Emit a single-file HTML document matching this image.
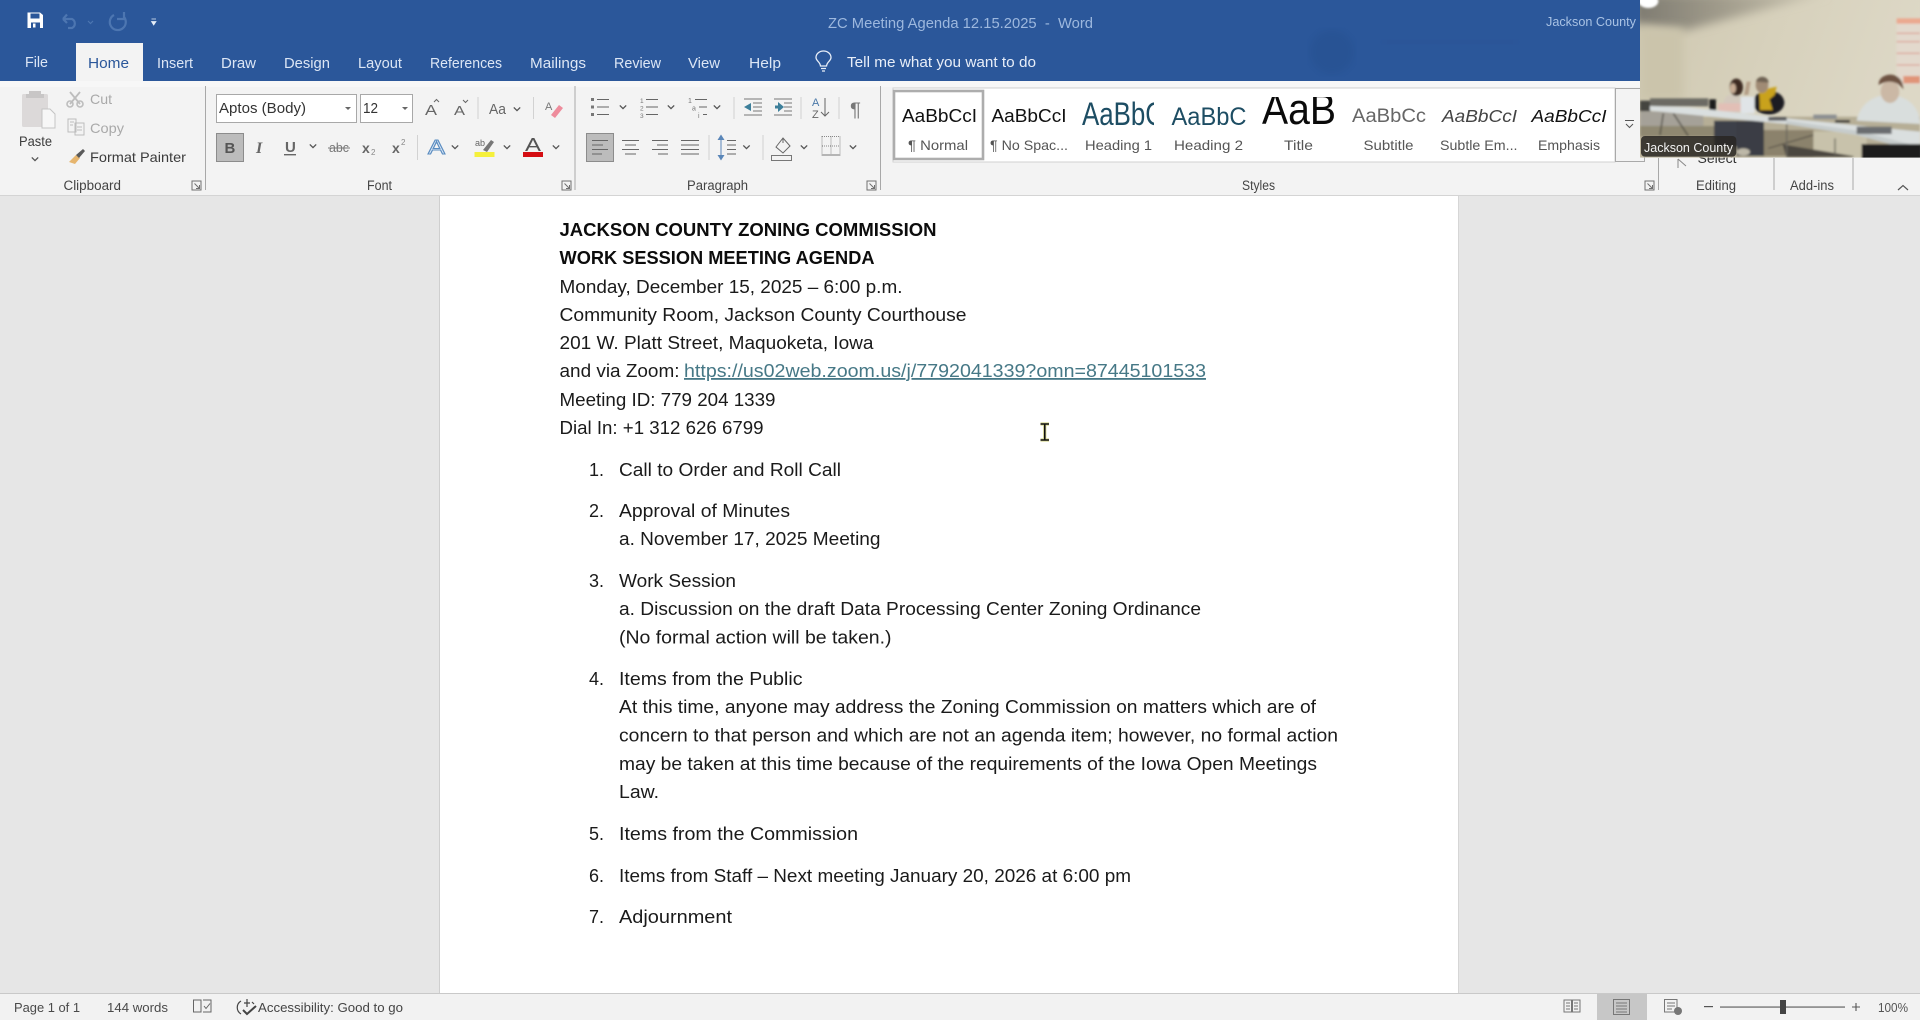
<!DOCTYPE html>
<html lang="en"><head><meta charset="utf-8"><title>ZC Meeting Agenda 12.15.2025 - Word</title>
<style>
html,body{margin:0;padding:0;background:#e6e6e6;width:1920px;height:1020px;overflow:hidden}
svg{display:block;position:absolute;left:0;top:0}
text{font-family:"Liberation Sans",sans-serif;white-space:pre}
.tab{font-size:15px;fill:#dce6f5}
.rb{font-size:14px;fill:#3c3c3c}
.lb{font-size:13.5px;fill:#444}
.dis{font-size:14px;fill:#a9a9a9}
.sl{font-size:14px;fill:#555}
.st{font-size:13.5px;fill:#505050}
.d{font-size:18px;fill:#1a1a1a}
.b{font-size:18px;fill:#0c0c0c;font-weight:bold}
.ic{fill:none;stroke:#666;stroke-width:1.2}
.sep{stroke:#d2d2d2;stroke-width:1}
.gsep{stroke:#a8a8a8;stroke-width:1}
</style></head><body>
<svg width="1920" height="1020" viewBox="0 0 1920 1020" xmlns="http://www.w3.org/2000/svg">
<defs>
<path id="ch" d="M-3.2,-1.6 L0,1.6 L3.2,-1.6" fill="none" stroke="#555" stroke-width="1.3"/>
<path id="dl" d="M0,0 H9 V9 H0 Z M2.5,2.5 L7.5,7.5 M7.5,4 V7.5 H4" fill="none" stroke="#707070" stroke-width="1"/>
<filter id="bl" x="-5%" y="-5%" width="110%" height="110%"><feGaussianBlur stdDeviation="3.5"/></filter>
<filter id="bl2" x="-20%" y="-20%" width="140%" height="140%"><feGaussianBlur stdDeviation="14"/></filter>
<linearGradient id="wall" x1="0" y1="0" x2="1" y2="0.2"><stop offset="0" stop-color="#cfc8b1"/><stop offset="0.5" stop-color="#d7d1bc"/><stop offset="1" stop-color="#ddd8c6"/></linearGradient>
<linearGradient id="ceil" x1="0" y1="0" x2="1" y2="0"><stop offset="0" stop-color="#7d7a70"/><stop offset="0.45" stop-color="#a09b8b"/><stop offset="1" stop-color="#cfc9b5"/></linearGradient>
<clipPath id="vc"><rect x="0" y="0" width="840" height="473"/></clipPath>
<clipPath id="galc"><rect x="1250" y="97" width="100" height="60"/></clipPath>
<clipPath id="h1c"><rect x="1078" y="92" width="76" height="60"/></clipPath>
</defs>

<!-- Backgrounds -->
<rect x="0" y="0" width="1920" height="1020" fill="#e6e6e6"/>
<rect x="0" y="0" width="1920" height="81" fill="#2b579a"/>
<rect x="0" y="81" width="1920" height="114" fill="#f3f3f3"/>
<rect x="0" y="81" width="1640" height="6" fill="#f7f7f7"/>
<rect x="0" y="195" width="1920" height="1" fill="#d4d4d4"/>
<rect x="440" y="196" width="1018" height="797" fill="#fff"/>
<rect x="439" y="196" width="1" height="797" fill="#cfcfcf"/>
<rect x="1458" y="196" width="1" height="797" fill="#d6d6d6"/>
<rect x="0" y="993" width="1920" height="27" fill="#f2f2f2"/>
<rect x="0" y="993" width="1920" height="1" fill="#c9c9c9"/>

<!-- Title bar watermark -->
<g opacity=".09"><circle cx="1332" cy="52" r="22" fill="#10305f" filter="url(#bl)"/><rect x="1385" y="40" width="130" height="4" fill="#3b2d6f" filter="url(#bl)"/></g>

<!-- QAT -->
<g>
<path d="M27.5,12.5 H40 L43,15 V28 H27.5 Z" fill="#fff"/>
<rect x="30.5" y="13.5" width="9" height="5" fill="#2b579a"/>
<rect x="31" y="22.5" width="9" height="5.5" fill="#2b579a"/>
<rect x="33" y="23.5" width="2.5" height="4" fill="#fff"/>
<path d="M63,19 H72 A5,5 0 0 1 72,28 H68 M63,19 L67,14.5 M63,19 L67,23" fill="none" stroke="#4d76b1" stroke-width="2.2"/>
<path d="M88,21 l2.5,2.5 l2.5,-2.5" fill="none" stroke="#4d76b1" stroke-width="1.2"/>
<path d="M114,15 A8,8 0 1 0 124,17 M124,12 V19 H117" fill="none" stroke="#4d76b1" stroke-width="2.2"/>
<path d="M151.5,19 H156 M151.5,21.5 H156 L153.7,25 Z" fill="#e6eef8" stroke="#e6eef8" stroke-width=".8"/>
</g>

<!-- Tabs -->
<rect x="76" y="43" width="67" height="38" fill="#f3f3f3"/>
<text class="tab" x="25" y="67" textLength="23" lengthAdjust="spacingAndGlyphs">File</text>
<text class="tab" style="fill:#2b579a" x="88" y="68" textLength="41" lengthAdjust="spacingAndGlyphs">Home</text>
<text class="tab" x="157" y="68" textLength="36" lengthAdjust="spacingAndGlyphs">Insert</text>
<text class="tab" x="221" y="68" textLength="35" lengthAdjust="spacingAndGlyphs">Draw</text>
<text class="tab" x="284" y="68" textLength="46" lengthAdjust="spacingAndGlyphs">Design</text>
<text class="tab" x="358" y="68" textLength="44" lengthAdjust="spacingAndGlyphs">Layout</text>
<text class="tab" x="430" y="68" textLength="72" lengthAdjust="spacingAndGlyphs">References</text>
<text class="tab" x="530" y="68" textLength="56" lengthAdjust="spacingAndGlyphs">Mailings</text>
<text class="tab" x="614" y="68" textLength="47" lengthAdjust="spacingAndGlyphs">Review</text>
<text class="tab" x="688" y="68" textLength="32" lengthAdjust="spacingAndGlyphs">View</text>
<text class="tab" x="749" y="68" textLength="32" lengthAdjust="spacingAndGlyphs">Help</text>
<path d="M820.5,66 C820,61.5 816,61 816,57.5 A7.5,6.5 0 0 1 831,57.5 C831,61 827,61.5 826.5,66 Z M821,68.5 H826 M822,71 H825" fill="none" stroke="#e8eef8" stroke-width="1.3"/>
<text class="tab" style="fill:#e8eef8" x="847" y="67" textLength="189" lengthAdjust="spacingAndGlyphs">Tell me what you want to do</text>
<text x="828" y="28" style="font-size:15px;fill:#9db8de" textLength="265" lengthAdjust="spacingAndGlyphs">ZC Meeting Agenda 12.15.2025  -  Word</text>
<text x="1546" y="26" style="font-size:13px;fill:#a9c2e4" textLength="90" lengthAdjust="spacingAndGlyphs">Jackson County</text>

<!-- Clipboard group -->
<g>
<rect x="22" y="94" width="26" height="33" rx="1.5" fill="#dcd9d9"/>
<path d="M29,94 V91 H41 V94 H44 V98 H26 V94 Z" fill="#c8c6c6"/>
<path d="M42,109 H50 L55,114 V128 H42 Z" fill="#f7f7f7" stroke="#c4c4c4"/>
<text class="rb" x="19" y="146" textLength="33" lengthAdjust="spacingAndGlyphs">Paste</text>
<use href="#ch" x="35" y="159"/>
<path d="M70,92 L80,104 M80,92 L70,104" stroke="#bdbdbd" stroke-width="1.8"/>
<circle cx="70" cy="104" r="3" fill="none" stroke="#bdbdbd" stroke-width="1.6"/><circle cx="80" cy="104" r="3" fill="none" stroke="#bdbdbd" stroke-width="1.6"/>
<text class="dis" x="90" y="104" textLength="22" lengthAdjust="spacingAndGlyphs">Cut</text>
<path d="M68,119 H76 V132 H68 Z M75,123 H84 V135 H75 Z M70,122 H74 M70,125 H73 M77,127 H82 M77,130 H82" fill="#f3f3f3" stroke="#bdbdbd"/>
<text class="dis" x="90" y="133" textLength="34" lengthAdjust="spacingAndGlyphs">Copy</text>
<path d="M69,162 L76,155 L80,158 L75,164 Z" fill="#e6b56e"/>
<path d="M76,155 L83,149 L85,151 L79,158 Z" fill="#5a5a5a"/>
<text class="rb" x="90" y="162" textLength="96" lengthAdjust="spacingAndGlyphs">Format Painter</text>
<text class="lb" x="63.5" y="190" textLength="57.5" lengthAdjust="spacingAndGlyphs">Clipboard</text>
<use href="#dl" x="192" y="181"/>
<line class="gsep" x1="205.5" y1="86" x2="205.5" y2="190"/>
</g>

<!-- Font group -->
<g>
<rect x="216.5" y="94.5" width="140" height="28" fill="#fff" stroke="#a8a8a8"/>
<rect x="360.5" y="94.5" width="52" height="28" fill="#fff" stroke="#a8a8a8"/>
<text x="219" y="113" style="font-size:15px;fill:#333" textLength="87" lengthAdjust="spacingAndGlyphs">Aptos (Body)</text>
<text x="363" y="113" style="font-size:15px;fill:#333" textLength="15" lengthAdjust="spacingAndGlyphs">12</text>
<path d="M345,107 h6 l-3,3 z M402,107 h6 l-3,3 z" fill="#666"/>
<text x="425" y="115" style="font-size:15px;fill:#666" textLength="12" lengthAdjust="spacingAndGlyphs">A</text>
<path d="M434,102 l2.5,-2.5 l2.5,2.5" fill="none" stroke="#666"/>
<text x="454" y="115" style="font-size:13px;fill:#666" textLength="11" lengthAdjust="spacingAndGlyphs">A</text>
<path d="M463,100 l2.5,2.5 l2.5,-2.5" fill="none" stroke="#666"/>
<line class="sep" x1="478" y1="97" x2="478" y2="119"/>
<text x="489" y="114" style="font-size:14.5px;fill:#666" textLength="17" lengthAdjust="spacingAndGlyphs">Aa</text>
<use href="#ch" x="517" y="109"/>
<line class="sep" x1="533.5" y1="97" x2="533.5" y2="119"/>
<text x="545" y="110" style="font-size:11px;fill:#777">A</text>
<path d="M551,115 L559,105 L563,108 L555,118 Z" fill="#ee8c9c"/>

<rect x="216.5" y="133.5" width="27" height="28" fill="#bcbcbc" stroke="#8c8c8c"/>
<text x="224.5" y="153" style="font-size:15px;font-weight:bold;fill:#555">B</text>
<text x="256" y="153" style="font-size:16px;font-weight:bold;font-style:italic;fill:#666;font-family:'Liberation Serif',serif">I</text>
<text x="285" y="152" style="font-size:15px;font-weight:bold;fill:#666">U</text>
<rect x="284" y="154" width="12" height="1.4" fill="#666"/>
<use href="#ch" x="313" y="146"/>
<text x="329" y="152" style="font-size:12.5px;fill:#777" textLength="20" lengthAdjust="spacingAndGlyphs">abc</text>
<line x1="328" y1="148" x2="350" y2="148" stroke="#777"/>
<text x="362" y="153" style="font-size:14px;font-weight:bold;fill:#666">x</text>
<text x="371" y="155" style="font-size:8px;fill:#888">2</text>
<text x="392" y="153" style="font-size:14px;font-weight:bold;fill:#666">x</text>
<text x="401" y="145" style="font-size:8px;fill:#888">2</text>
<line class="sep" x1="417.5" y1="135" x2="417.5" y2="160"/>
<text x="428" y="154" style="font-size:20px;fill:#dce9f7;stroke:#5a8cc0;stroke-width:1" textLength="17" lengthAdjust="spacingAndGlyphs">A</text>
<use href="#ch" x="455" y="147"/>
<text x="475" y="146" style="font-size:9px;fill:#666">ab</text>
<path d="M483,150 L491,140 L494,142 L487,152 Z" fill="#777"/>
<rect x="474.5" y="152" width="20" height="5" fill="#f5f03c"/>
<use href="#ch" x="507" y="147"/>
<text x="525" y="151" style="font-size:18px;fill:#555" textLength="16" lengthAdjust="spacingAndGlyphs">A</text>
<rect x="523" y="152" width="20" height="5" fill="#d40d12"/>
<use href="#ch" x="556" y="147"/>
<text class="lb" x="367" y="190" textLength="25" lengthAdjust="spacingAndGlyphs">Font</text>
<use href="#dl" x="562" y="181"/>
<line class="gsep" x1="575" y1="86" x2="575" y2="190"/>
</g>

<!-- Paragraph group -->
<g>
<path d="M597,99.5 H609 M597,107 H609 M597,114.5 H609 M646,99.5 H658 M646,107 H658 M646,114.5 H658 M695,99.5 H707 M699,107 H707 M703,114.5 H707" stroke="#666" fill="none"/>
<path d="M591,98 h3 v3 h-3 z M591,105.5 h3 v3 h-3 z M591,113 h3 v3 h-3 z" fill="#777"/>
<text x="640" y="103" style="font-size:6.5px;fill:#777">1</text><text x="640" y="110.5" style="font-size:6.5px;fill:#777">2</text><text x="640" y="118" style="font-size:6.5px;fill:#777">3</text>
<text x="688" y="103" style="font-size:7px;fill:#777">1</text><text x="692" y="110.5" style="font-size:7px;fill:#777">a</text><text x="698" y="118" style="font-size:7px;fill:#777">i</text>
<use href="#ch" x="623" y="107"/><use href="#ch" x="671" y="107"/><use href="#ch" x="717" y="107"/>
<line class="sep" x1="734" y1="97" x2="734" y2="119"/>
<path d="M744,99 H762 M753,103 H762 M753,107 H762 M753,111 H762 M744,115 H762 M784,103 H792 M784,107 H792 M784,111 H792 M774,99 H792 M774,115 H792" stroke="#777"/>
<path d="M751,103 L744,107 L751,111 Z M775,105.5 H778 V102 L784,107 L778,112 V108.5 H775 Z" fill="#3d7f9a"/>
<line class="sep" x1="801" y1="97" x2="801" y2="119"/>
<text x="812" y="106" style="font-size:11px;fill:#4a78a8">A</text><text x="812" y="118" style="font-size:11px;fill:#666">Z</text>
<path d="M825,98 V116 M821,112 L825,116 L829,112" fill="none" stroke="#666"/>
<line class="sep" x1="839" y1="97" x2="839" y2="119"/>
<text x="850" y="116" style="font-size:19px;fill:#777" textLength="11" lengthAdjust="spacingAndGlyphs">¶</text>

<rect x="586.5" y="133.5" width="27" height="28" fill="#bcbcbc" stroke="#8c8c8c"/>
<path d="M592,140.5 H608 M592,145 H603 M592,149.5 H608 M592,154 H602" stroke="#666"/>
<path d="M622,140.5 H639 M625,145 H636 M622,149.5 H639 M625,154 H636 M652,140.5 H668 M657,145 H668 M652,149.5 H668 M658,154 H668 M681,140.5 H699 M681,145 H699 M681,149.5 H699 M681,154 H699" stroke="#666"/>
<line class="sep" x1="709" y1="135" x2="709" y2="160"/>
<path d="M721,135 V159" stroke="#5a86b8"/><path d="M717.5,140 L721,134.5 L724.5,140 Z M717.5,155 L721,160.5 L724.5,155 Z" fill="#5a86b8"/>
<path d="M727,140.5 H736 M727,145 H736 M727,149.5 H736 M727,154 H736" stroke="#666"/>
<use href="#ch" x="746.5" y="147"/>
<line class="sep" x1="763" y1="135" x2="763" y2="160"/>
<path d="M776,147 L783,138 L790,146 L783,153 Z M783,138 V143" fill="none" stroke="#666"/>
<rect x="771.5" y="155.5" width="20" height="5" fill="none" stroke="#777"/>
<use href="#ch" x="804" y="147"/>
<path d="M822,136.5 H840 V155 H822 Z M831,136.5 V155 M822,146 H840" fill="none" stroke="#888" stroke-dasharray="1 1"/>
<path d="M822,155 H840" stroke="#777"/>
<use href="#ch" x="853" y="147"/>
<text class="lb" x="687" y="190" textLength="61" lengthAdjust="spacingAndGlyphs">Paragraph</text>
<use href="#dl" x="867" y="181"/>
<line class="gsep" x1="880.5" y1="86" x2="880.5" y2="190"/>
</g>

<!-- Styles gallery -->
<g>
<rect x="893" y="88" width="722" height="74" fill="#fff" stroke="#d2d2d2"/>
<rect x="894" y="91" width="89" height="68" fill="#fff" stroke="#adadad" stroke-width="2.6"/>
<rect x="1615.5" y="88.5" width="29" height="73" fill="#f3f3f3" stroke="#a9a9a9"/>
<path d="M1625,120.5 H1634 M1626,124 L1629.5,127.5 L1633,124" fill="none" stroke="#555"/>

<text x="902" y="122" style="font-size:18px;fill:#111" textLength="75" lengthAdjust="spacingAndGlyphs">AaBbCcI</text>
<text x="991.5" y="122" style="font-size:18px;fill:#111" textLength="75" lengthAdjust="spacingAndGlyphs">AaBbCcI</text>
<text x="1082" y="125" clip-path="url(#h1c)" style="font-size:32px;fill:#1d4d63" textLength="82" lengthAdjust="spacingAndGlyphs">AaBbC</text>
<text x="1171.5" y="125" style="font-size:25px;fill:#1d4d63" textLength="75" lengthAdjust="spacingAndGlyphs">AaBbC</text>
<text x="1262" y="124" clip-path="url(#galc)" style="font-size:44px;fill:#0a0a0a" textLength="74" lengthAdjust="spacingAndGlyphs">AaB</text>
<text x="1352" y="122" style="font-size:19px;fill:#666" textLength="74" lengthAdjust="spacingAndGlyphs">AaBbCc</text>
<text x="1442" y="122" style="font-size:17.5px;font-style:italic;fill:#444" textLength="75" lengthAdjust="spacingAndGlyphs">AaBbCcI</text>
<text x="1531.5" y="122" style="font-size:17.5px;font-style:italic;fill:#111" textLength="75" lengthAdjust="spacingAndGlyphs">AaBbCcI</text>

<text class="sl" x="908" y="150" textLength="60" lengthAdjust="spacingAndGlyphs">¶ Normal</text>
<text class="sl" x="990" y="150" textLength="78" lengthAdjust="spacingAndGlyphs">¶ No Spac...</text>
<text class="sl" x="1085" y="150" textLength="67" lengthAdjust="spacingAndGlyphs">Heading 1</text>
<text class="sl" x="1174" y="150" textLength="69" lengthAdjust="spacingAndGlyphs">Heading 2</text>
<text class="sl" x="1284" y="150" textLength="29" lengthAdjust="spacingAndGlyphs">Title</text>
<text class="sl" x="1363.5" y="150" textLength="50" lengthAdjust="spacingAndGlyphs">Subtitle</text>
<text class="sl" x="1440" y="150" textLength="77.5" lengthAdjust="spacingAndGlyphs">Subtle Em...</text>
<text class="sl" x="1538" y="150" textLength="62" lengthAdjust="spacingAndGlyphs">Emphasis</text>

<text class="lb" x="1242" y="190" textLength="33" lengthAdjust="spacingAndGlyphs">Styles</text>
<use href="#dl" x="1645" y="181"/>
<line class="gsep" x1="1658.5" y1="158" x2="1658.5" y2="190"/>
<path d="M1678,159 L1686,166 M1678,159 V168" fill="none" stroke="#888"/>
<text x="1697.5" y="163" style="font-size:14px;fill:#333" textLength="39" lengthAdjust="spacingAndGlyphs">Select</text>
<text class="lb" x="1696" y="190" textLength="40" lengthAdjust="spacingAndGlyphs">Editing</text>
<line class="gsep" x1="1774" y1="158" x2="1774" y2="190"/>
<text class="lb" x="1790" y="190" textLength="44" lengthAdjust="spacingAndGlyphs">Add-ins</text>
<line class="gsep" x1="1853" y1="158" x2="1853" y2="190"/>
<path d="M1898,190 L1903,185.5 L1908,190" fill="none" stroke="#555" stroke-width="1.2"/>
</g>

<!-- Video -->
<g transform="translate(1640,0) scale(.33333)" clip-path="url(#vc)">
<rect x="0" y="0" width="840" height="473" fill="url(#wall)"/>
<path d="M-20,-20 H560 L130,92 L-20,70 Z" fill="url(#ceil)" filter="url(#bl2)"/>
<rect x="0" y="85" width="130" height="215" fill="#cbc4ab" filter="url(#bl2)"/>
<g filter="url(#bl)">
<ellipse cx="25" cy="4" rx="30" ry="20" fill="#fff"/>
<rect x="770" y="55" width="80" height="200" fill="#e3d9cd"/>
<rect x="770" y="55" width="80" height="16" fill="#eba88f"/>
<path d="M770,100 H840 M770,125 H840 M770,160 H840 M770,195 H840" stroke="#dca598" stroke-width="4"/>
<rect x="790" y="228" width="50" height="22" fill="#e09478"/>
<!-- floor -->
<rect x="0" y="350" width="840" height="123" fill="#b6ae96"/>
<rect x="520" y="395" width="160" height="78" fill="#c8c2ab"/>
<rect x="0" y="378" width="225" height="32" fill="#8f8871"/>
<!-- chairs -->
<rect x="0" y="302" width="32" height="32" fill="#45443f"/>
<rect x="30" y="295" width="175" height="24" fill="#6c6a63"/>
<rect x="0" y="334" width="190" height="44" fill="#a5a198"/>
<path d="M70,340 L60,405 M100,340 L145,408" stroke="#4a473f" stroke-width="4" fill="none"/>
<!-- legs/people lower -->
<path d="M222,362 H296 V440 H222 Z" fill="#3c4048"/>
<path d="M290,362 H372 V468 H290 Z" fill="#3b3d44"/>
<ellipse cx="310" cy="456" rx="20" ry="11" fill="#bdb8a8"/>
<path d="M372,390 H520 V468 H372 Z" fill="#8b826c"/>
<path d="M385,445 L520,405 M430,435 L640,470 H440 Z" fill="#4c4740" stroke="#4c4740" stroke-width="3"/>
<path d="M440,360 V470 M585,415 V465" stroke="#6a675f" stroke-width="4"/>
<!-- person 1 -->
<ellipse cx="280" cy="312" rx="30" ry="30" fill="#d3c9bd"/>
<rect x="235" y="310" width="70" height="24" fill="#e2bfb6"/>
<ellipse cx="289" cy="262" rx="20" ry="26" fill="#3d2c22"/>
<ellipse cx="279" cy="265" rx="9" ry="15" fill="#c8ac94"/>
<rect x="208" y="298" width="20" height="36" fill="#1f1f1f"/>
<!-- person 2 -->
<ellipse cx="386" cy="308" rx="47" ry="36" fill="#1e1c20"/>
<path d="M358,272 L410,260 L404,285 L388,298 L398,330 H360 Z" fill="#c9a21e"/>
<ellipse cx="366" cy="255" rx="19" ry="24" fill="#a08b74"/>
<path d="M348,245 C352,225 384,225 386,248 Z" fill="#6e6252"/>
<rect x="302" y="290" width="42" height="50" fill="#e0e4e7"/>
<path d="M320,245 L332,245 L325,285 L312,285 Z" fill="#b49d86"/>
<!-- person 3 -->
<path d="M650,362 C660,312 700,285 745,285 C800,285 840,320 840,372 Z" fill="#d9dedd"/>
<ellipse cx="750" cy="275" rx="28" ry="34" fill="#cbb8a5"/>
<path d="M716,250 C720,215 790,210 790,268 C770,240 740,240 716,255 Z" fill="#6e5242"/>
<!-- table -->
<path d="M30,318 L150,322 L440,355 L840,395 V455 L650,405 L440,372 L30,332 Z" fill="#dadfdf"/>
<path d="M440,372 L650,405 L840,455 V440 L650,392 L440,362 Z" fill="#c6cccc"/>
<rect x="385" y="351" width="55" height="11" fill="#56595b"/>
<rect x="520" y="344" width="70" height="13" fill="#8b8f91"/>
<rect x="650" y="380" width="105" height="22" fill="#6a6d6f"/>
<rect x="585" y="360" width="45" height="8" fill="#333"/>
<rect x="665" y="432" width="180" height="45" fill="#1c1b1b"/>
</g>
<rect x="3" y="408" width="286" height="62" rx="12" fill="#282622" fill-opacity=".85"/>
</g>
<text x="1644" y="152" style="font-size:13px;fill:#f2f2f2" textLength="89" lengthAdjust="spacingAndGlyphs">Jackson County</text>

<!-- Document -->
<text class="b" x="559.5" y="236" textLength="377" lengthAdjust="spacingAndGlyphs">JACKSON COUNTY ZONING COMMISSION</text>
<text class="b" x="559.5" y="264" textLength="315" lengthAdjust="spacingAndGlyphs">WORK SESSION MEETING AGENDA</text>
<text class="d" x="559.5" y="293" textLength="343" lengthAdjust="spacingAndGlyphs">Monday, December 15, 2025 – 6:00 p.m.</text>
<text class="d" x="559.5" y="321" textLength="407" lengthAdjust="spacingAndGlyphs">Community Room, Jackson County Courthouse</text>
<text class="d" x="559.5" y="349" textLength="314" lengthAdjust="spacingAndGlyphs">201 W. Platt Street, Maquoketa, Iowa</text>
<text class="d" x="559.5" y="377" textLength="120" lengthAdjust="spacingAndGlyphs">and via Zoom:</text>
<text class="d" style="fill:#467886;text-decoration:underline" x="684" y="377" textLength="522" lengthAdjust="spacingAndGlyphs">https://us02web.zoom.us/j/7792041339?omn=87445101533</text>
<text class="d" x="559.5" y="406" textLength="216" lengthAdjust="spacingAndGlyphs">Meeting ID: 779 204 1339</text>
<text class="d" x="559.5" y="434" textLength="204" lengthAdjust="spacingAndGlyphs">Dial In: +1 312 626 6799</text>

<text class="d" x="589" y="476">1.</text>
<text class="d" x="619" y="476" textLength="222" lengthAdjust="spacingAndGlyphs">Call to Order and Roll Call</text>
<text class="d" x="589" y="517">2.</text>
<text class="d" x="619" y="517" textLength="171" lengthAdjust="spacingAndGlyphs">Approval of Minutes</text>
<text class="d" x="619" y="545" textLength="261.5" lengthAdjust="spacingAndGlyphs">a. November 17, 2025 Meeting</text>
<text class="d" x="589" y="587">3.</text>
<text class="d" x="619" y="587" textLength="117" lengthAdjust="spacingAndGlyphs">Work Session</text>
<text class="d" x="619" y="615" textLength="582" lengthAdjust="spacingAndGlyphs">a. Discussion on the draft Data Processing Center Zoning Ordinance</text>
<text class="d" x="619" y="643.5" textLength="272.5" lengthAdjust="spacingAndGlyphs">(No formal action will be taken.)</text>
<text class="d" x="589" y="685">4.</text>
<text class="d" x="619" y="685" textLength="183.5" lengthAdjust="spacingAndGlyphs">Items from the Public</text>
<text class="d" x="619" y="713" textLength="697" lengthAdjust="spacingAndGlyphs">At this time, anyone may address the Zoning Commission on matters which are of</text>
<text class="d" x="619" y="741.5" textLength="719" lengthAdjust="spacingAndGlyphs">concern to that person and which are not an agenda item; however, no formal action</text>
<text class="d" x="619" y="770" textLength="698" lengthAdjust="spacingAndGlyphs">may be taken at this time because of the requirements of the Iowa Open Meetings</text>
<text class="d" x="619" y="798" textLength="40" lengthAdjust="spacingAndGlyphs">Law.</text>
<text class="d" x="589" y="840">5.</text>
<text class="d" x="619" y="840" textLength="239" lengthAdjust="spacingAndGlyphs">Items from the Commission</text>
<text class="d" x="589" y="882">6.</text>
<text class="d" x="619" y="882" textLength="512" lengthAdjust="spacingAndGlyphs">Items from Staff – Next meeting January 20, 2026 at 6:00 pm</text>
<text class="d" x="589" y="923">7.</text>
<text class="d" x="619" y="923" textLength="113" lengthAdjust="spacingAndGlyphs">Adjournment</text>

<!-- I-beam cursor -->
<path d="M1040.5,424 H1049 M1044.75,424 V440 M1040.5,440 H1049" stroke="#d8d890" stroke-width="3.2" fill="none"/>
<path d="M1040.5,424 H1049 M1044.75,424 V440 M1040.5,440 H1049" stroke="#111" stroke-width="1.6" fill="none"/>

<!-- Status bar -->
<text x="14" y="1012" style="font-size:13px;fill:#4a4a4a" textLength="66" lengthAdjust="spacingAndGlyphs">Page 1 of 1</text>
<text x="107" y="1012" style="font-size:13px;fill:#4a4a4a" textLength="61" lengthAdjust="spacingAndGlyphs">144 words</text>
<path d="M193.5,1000 H201 V1012 H193.5 Z M203,1000 H211 V1012 H203" fill="none" stroke="#666"/>
<path d="M204,1006 l2,2.5 l4,-5" fill="none" stroke="#666"/>
<path d="M241,1001 C236,1004 236,1011 241,1014 M247,999 V1007 M244,1003 H250 M252,1002 L254,1004" fill="none" stroke="#444" stroke-width="1.2"/>
<path d="M243,1010 L247,1014 L256,1006" fill="none" stroke="#444" stroke-width="2"/>
<text x="258" y="1012" style="font-size:13px;fill:#444" textLength="145" lengthAdjust="spacingAndGlyphs">Accessibility: Good to go</text>

<path d="M1564,1000 H1571.5 V1012 H1564 Z M1572.5,1000 H1580 V1012 H1572.5 Z M1566,1003 H1570 M1566,1006 H1570 M1566,1009 H1570 M1574,1003 H1578 M1574,1006 H1578 M1574,1009 H1578" fill="none" stroke="#777"/>
<rect x="1597" y="994" width="50" height="26" fill="#c7c7c7"/>
<path d="M1613.5,999.5 H1629.5 V1014.5 H1613.5 Z M1616,1003 H1627 M1616,1006 H1627 M1616,1009 H1627 M1616,1012 H1627" fill="none" stroke="#777"/>
<path d="M1664.5,999.5 H1677 V1012 H1664.5 Z M1667,1003 H1675 M1667,1006 H1675 M1667,1009 H1672" fill="none" stroke="#777"/>
<circle cx="1678" cy="1011" r="4" fill="#777"/>
<rect x="1704" y="1006" width="9" height="1.2" fill="#555"/>
<rect x="1720" y="1006.5" width="125" height="1.1" fill="#555"/>
<rect x="1780" y="1000" width="6" height="14" fill="#444"/>
<path d="M1852,1007 H1860 M1856,1003 V1011" stroke="#555" stroke-width="1.1"/>
<text x="1878" y="1012" style="font-size:13px;fill:#555" textLength="30" lengthAdjust="spacingAndGlyphs">100%</text>
</svg>
</body></html>
